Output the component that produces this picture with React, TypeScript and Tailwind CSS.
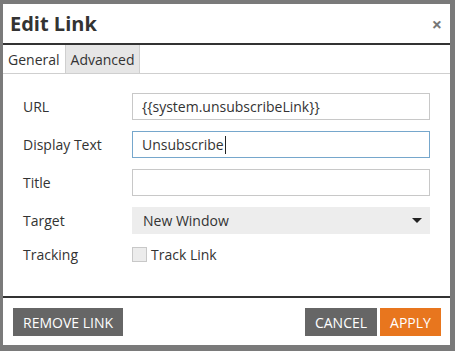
export default function App() {
  const rows = [
    { label: "URL", value: "{{system.unsubscribeLink}}" },
    { label: "Display Text", value: "Unsubscribe", focused: true },
    { label: "Title", value: "" },
  ];
  return (
    <div className="h-[351px] w-[455px] bg-[#7a7a7a] pb-[6px] pl-[3px] pr-[5px] pt-[4px] font-['Open_Sans',sans-serif] text-[#333]">
      <div className="flex h-full flex-col bg-white">
        <div className="flex h-[39px] items-center justify-between pl-[7px] pr-[8px]">
          <h2 className="text-[20px] font-bold leading-none text-[#333]">Edit Link</h2>
          <span className="text-[18px] font-bold leading-none text-[#777]">×</span>
        </div>
        <div className="h-[2px] bg-[#333]" />
        <div className="flex h-[29px] border-b border-[#cfcfcf] text-[14px]">
          <div className="flex items-center bg-white px-[5px]">General</div>
          <div className="flex items-center border-x border-[#cfcfcf] bg-[#e6e6e6] px-[5px]">Advanced</div>
        </div>
        <div className="flex flex-1 flex-col gap-[11px] px-[20px] pt-[19px] text-[14px]">
          {rows.map((r) => (
            <div key={r.label} className="flex h-[27px] items-center">
              <span className="w-[109px]">{r.label}</span>
              <div className={`flex h-full flex-1 items-center border px-[9px] ${r.focused ? "border-[#76a7cc]" : "border-[#c8c8c8]"}`}>
                {r.value}
                {r.focused && <span className="ml-px h-[18px] w-px bg-[#222]" />}
              </div>
            </div>
          ))}
          <div className="flex h-[27px] items-center">
            <span className="w-[109px]">Target</span>
            <div className="flex h-full flex-1 items-center justify-between bg-[#ededed] pl-[11px] pr-[8px]">
              New Window
              <svg width="10" height="6" viewBox="0 0 10 6"><path d="M0 0h10L5 5z" fill="#222" /></svg>
            </div>
          </div>
          <div className="mt-[2px] flex h-[15px] items-center">
            <span className="w-[109px]">Tracking</span>
            <span className="h-[15px] w-[15px] border border-[#c8c8c8] bg-[#ececec]" />
            <span className="ml-[4px]">Track Link</span>
          </div>
        </div>
        <div className="h-[2px] bg-[#333]" />
        <div className="flex items-center justify-between pb-[9px] pl-[10px] pr-[9px] pt-[10px] text-[14px] text-white">
          <button className="h-[28px] w-[110px] bg-[#666]">REMOVE LINK</button>
          <div className="flex gap-[3px]">
            <button className="h-[28px] w-[72px] bg-[#666]">CANCEL</button>
            <button className="h-[28px] w-[61px] bg-[#e8761e]">APPLY</button>
          </div>
        </div>
      </div>
    </div>
  );
}
